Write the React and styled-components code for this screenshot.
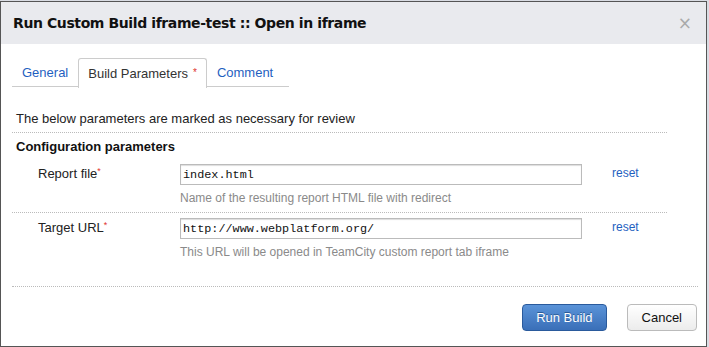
import React from "react";
import styled, { createGlobalStyle } from "styled-components";

const Global = createGlobalStyle`
  html, body { margin: 0; padding: 0; }
  body {
    background: #d9dce3;
    font-family: "Liberation Sans", Arial, sans-serif;
    padding-top: 1px;
    width: 709px;
    height: 347px;
    overflow: hidden;
  }
`;

const Dialog = styled.div`
  width: 705px;
  height: 344px;
  border: 1px solid #555;
  background: #fff;
  display: flex;
  flex-direction: column;
`;

const Header = styled.div`
  height: 42px;
  background: #e9eaee;
  display: flex;
  align-items: center;
  justify-content: space-between;
  padding: 0 14px 0 12px;
`;

const Title = styled.h1`
  margin: 0;
  font-family: "DejaVu Sans", sans-serif;
  font-size: 14px;
  font-weight: bold;
  color: #111;
  letter-spacing: -0.4px;
`;

const Close = styled.span`
  color: #aaa;
  font-size: 17px;
  font-family: "DejaVu Sans", sans-serif;
`;

const Body = styled.div`
  padding: 14px 11px 0 11px;
  flex: 1;
  display: flex;
  flex-direction: column;
`;

const Tabs = styled.div`
  display: flex;
  width: 277px;
  border-bottom: 1px solid #ccc;
  height: 28px;
`;

const Tab = styled.div`
  font-size: 13px;
  padding: 0 10px;
  display: flex;
  align-items: center;
  color: ${(p) => (p.$active ? "#333" : "#1f5fbf")};
  background: #fff;
  ${(p) =>
    p.$active &&
    `
    border: 1px solid #ccc;
    border-bottom: none;
    border-radius: 3px 3px 0 0;
    margin-bottom: -1px;
    height: 29px;
    padding: 0 9px;
  `}
`;

const Star = styled.span`
  color: #e0322d;
  font-size: 10px;
  margin-left: 5px;
  align-self: flex-start;
  margin-top: 8px;
`;

const Note = styled.p`
  margin: 24px 0 0 4px;
  font-size: 13px;
  color: #222;
`;

const Dotted = styled.hr`
  margin: ${(p) => p.$m || "6px 0 0 0"};
  border: none;
  border-top: 1px dotted #bbb;
  width: ${(p) => p.$w || "655px"};
`;

const Section = styled.h3`
  margin: 6px 0 0 4px;
  font-size: 13px;
  font-weight: bold;
  color: #111;
`;

const Row = styled.div`
  display: grid;
  grid-template-columns: 142px 402px auto;
  padding-left: 26px;
  margin-top: ${(p) => p.$top || "9px"};
`;

const Label = styled.label`
  font-size: 13px;
  color: #222;
  padding-top: 2px;
  sup {
    color: #e0322d;
    font-size: 9px;
    vertical-align: 4px;
  }
`;

const Field = styled.div`
  display: flex;
  flex-direction: column;
`;

const Input = styled.div`
  border: 1px solid #bbb;
  box-shadow: inset 0 1px 1px #ddd;
  font-family: "Liberation Mono", monospace;
  font-size: 11.8px;
  color: #111;
  padding: 0 2px;
  display: flex;
  align-items: center;
  box-sizing: border-box;
  height: 21px;
`;

const Hint = styled.div`
  font-size: 12px;
  color: #8a8a8a;
  margin-top: 6px;
`;

const Reset = styled.a`
  font-size: 12px;
  color: #1f5fbf;
  padding: 2px 0 0 30px;
`;

const Footer = styled.div`
  display: flex;
  justify-content: flex-end;
  gap: 20px;
  padding: 17px 0 0 0;
  margin-right: -2px;
`;

const Button = styled.button`
  height: 27px;
  padding: 0 ${(p) => (p.$primary ? "13px" : "14px")};
  border-radius: 4px;
  font-family: "Liberation Sans", Arial, sans-serif;
  font-size: 13px;
  border: 1px solid ${(p) => (p.$primary ? "#2a5a9c" : "#bbb")};
  color: ${(p) => (p.$primary ? "#fff" : "#111")};
  background: ${(p) =>
    p.$primary
      ? "linear-gradient(#5a93d8, #3a6fb8)"
      : "linear-gradient(#fff, #ececec)"};
  text-shadow: ${(p) => (p.$primary ? "0 -1px 0 #2b5a96" : "none")};
`;

export default function App() {
  return (
    <>
      <Global />
      <Dialog>
        <Header>
          <Title>Run Custom Build iframe-test :: Open in iframe</Title>
          <Close>×</Close>
        </Header>
        <Body>
          <Tabs>
            <Tab>General</Tab>
            <Tab $active>
              Build Parameters<Star>*</Star>
            </Tab>
            <Tab>Comment</Tab>
          </Tabs>
          <Note>The below parameters are marked as necessary for review</Note>
          <Dotted />
          <Section>Configuration parameters</Section>
          <Row $top="10px">
            <Label>
              Report file<sup>*</sup>
            </Label>
            <Field>
              <Input>index.html</Input>
              <Hint>Name of the resulting report HTML file with redirect</Hint>
            </Field>
            <Reset>reset</Reset>
          </Row>
          <Dotted $m="7px 0 0 0" />
          <Row $top="5px">
            <Label>
              Target URL<sup>*</sup>
            </Label>
            <Field>
              <Input>http://www.webplatform.org/</Input>
              <Hint>This URL will be opened in TeamCity custom report tab iframe</Hint>
            </Field>
            <Reset>reset</Reset>
          </Row>
          <Dotted $m="27px 0 0 0" $w="686px" />
          <Footer>
            <Button $primary>Run Build</Button>
            <Button>Cancel</Button>
          </Footer>
        </Body>
      </Dialog>
    </>
  );
}
